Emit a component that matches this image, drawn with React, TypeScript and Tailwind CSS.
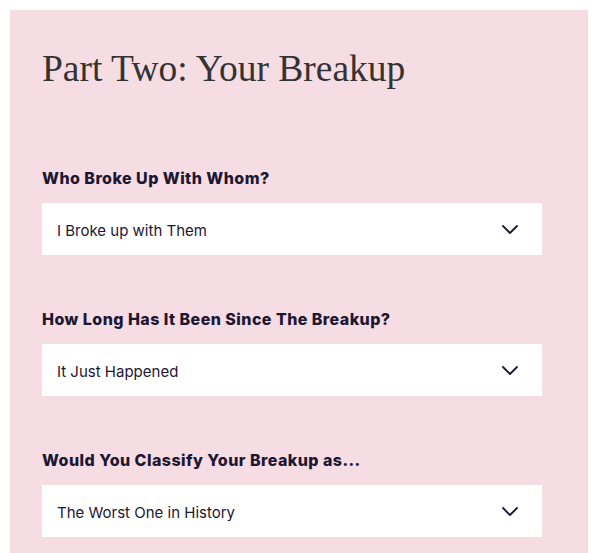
import React from 'react';

const questions = [
  { label: 'Who Broke Up With Whom?', value: 'I Broke up with Them' },
  { label: 'How Long Has It Been Since The Breakup?', value: 'It Just Happened' },
  { label: 'Would You Classify Your Breakup as...', value: 'The Worst One in History' },
];

const Chevron: React.FC = () => (
  <svg width="16" height="9" viewBox="0 0 16 9" fill="none" className="shrink-0">
    <path d="M1 1l7 7 7-7" stroke="#1c1733" strokeWidth="1.8" strokeLinecap="round" strokeLinejoin="round" />
  </svg>
);

const App: React.FC = () => {
  return (
    <div className="min-h-[553px] bg-white pt-[10px] pl-[10px] pr-[12px]">
      <div className="min-h-[543px] bg-[#f6dde3] pl-[32px] pt-[40px] font-['Inter',sans-serif] text-[#1c1733]">
        <h1 className="font-['Liberation_Serif',serif] text-[37.5px] leading-[38px] text-[#333333] font-normal">
          Part Two: Your Breakup
        </h1>
        <div className="mt-[80px] flex flex-col gap-[54px]">
          {questions.map((q) => (
            <div key={q.label} className="flex flex-col">
              <label className="text-[16px] leading-[20px] font-extrabold tracking-[0.45px]">{q.label}</label>
              <div className="mt-[15px] flex h-[52px] w-[500px] items-center justify-between bg-white pl-[15px] pr-[24px]">
                <span className="mt-[3px] text-[15px] leading-[20px]">{q.value}</span>
                <Chevron />
              </div>
            </div>
          ))}
        </div>
      </div>
    </div>
  );
};

export default App;
